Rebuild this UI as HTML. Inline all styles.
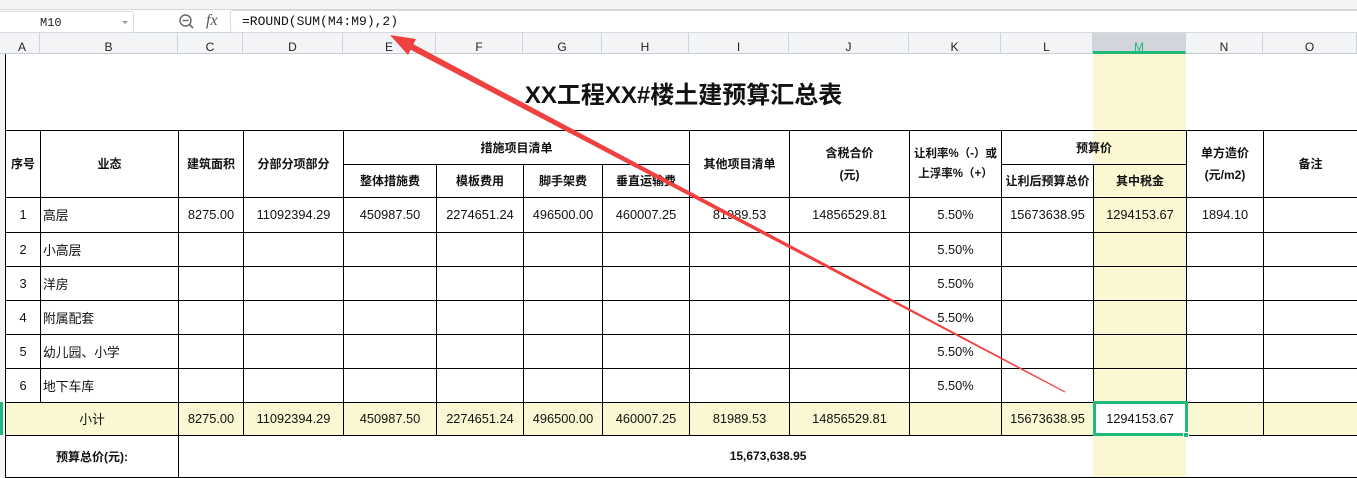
<!DOCTYPE html>
<html><head><meta charset="utf-8"><style>
*{margin:0;padding:0;box-sizing:border-box}
body{width:1357px;height:478px;overflow:hidden;background:#fff;font-family:"Liberation Sans","Noto Sans CJK SC",sans-serif;position:relative;color:#111}
.top{position:absolute;left:0;top:0;width:1357px;height:10px;background:#f3f4f6;border-bottom:1px solid #d5d7dc}
.fbar{position:absolute;left:0;top:10px;width:1357px;height:23px;background:#fff;border-bottom:1px solid #cfd2d8}
.namebox{position:absolute;left:0;top:1px;width:134px;height:22px;border:1px solid #d8dade;border-left:none;border-radius:0 3px 3px 0;font:12px "Liberation Mono",monospace;padding:4px 0 0 40px;color:#222}
.namebox:after{content:"";position:absolute;right:5px;top:9px;border:3px solid transparent;border-top:3px solid #999}
.formula{position:absolute;left:230px;top:0;width:1127px;height:23px;border:1px solid #d8dade;border-right:none;border-radius:3px 0 0 3px;font:13px "Liberation Mono",monospace;padding:3px 0 0 11px;color:#111}
.fx{position:absolute;left:206px;top:2px;font:italic 16px "Liberation Serif",serif;color:#555}
.colh{position:absolute;left:0;top:33px;width:1357px;height:21px;background:#f3f4f6;border-bottom:1px solid #c8ccd3}
.colh div{position:absolute;top:0;height:21px;font-size:12px;text-align:center;line-height:28px;color:#222;border-right:1px solid #d0d3d9}
.rowh{position:absolute;left:0;top:54px;width:5px;height:424px;background:#f3f4f6}
.ycol{position:absolute;left:1093px;top:54px;width:93px;height:424px;background:#faf7d2}
table{position:absolute;left:5px;top:54px;border-collapse:collapse;table-layout:fixed;width:1352px}
td{border:1px solid #000;font-size:12.8px;text-align:center;vertical-align:middle;padding:0;overflow:hidden;white-space:nowrap}
.b{font-weight:bold;font-size:12px}
.l{text-align:left;padding-left:2px}
.sub td{background:#faf8d2}
.sel{background:#fff!important;outline:3px solid #1fb97a;outline-offset:-2px}
</style></head><body>
<div class="top"></div>
<div class="fbar">
 <div class="namebox">M10</div>
 <svg style="position:absolute;left:178px;top:3px" width="18" height="18"><circle cx="7.5" cy="7.5" r="5.5" fill="none" stroke="#666" stroke-width="1.4"/><line x1="4.5" y1="7.5" x2="10.5" y2="7.5" stroke="#666" stroke-width="1.4"/><line x1="11.5" y1="11.5" x2="15" y2="15" stroke="#666" stroke-width="1.6"/></svg>
 <div class="fx">fx</div>
 <div class="formula">=ROUND(SUM(M4:M9),2)</div>
</div>
<div class="colh">
 <div style="left:5px;width:35px">A</div><div style="left:40px;width:138px">B</div><div style="left:178px;width:65px">C</div><div style="left:243px;width:100px">D</div><div style="left:343px;width:93px">E</div><div style="left:436px;width:87px">F</div><div style="left:523px;width:79px">G</div><div style="left:602px;width:87px">H</div><div style="left:689px;width:100px">I</div><div style="left:789px;width:120px">J</div><div style="left:909px;width:92px">K</div><div style="left:1001px;width:92px">L</div><div style="left:1093px;width:93px;background:#d2d5dc;color:#1fb97a;border-bottom:3px solid #1fb97a">M</div><div style="left:1186px;width:77px">N</div><div style="left:1263px;width:94px">O</div>
</div>
<div class="rowh"></div>
<div style="position:absolute;left:0;top:402px;width:3px;height:33px;background:#1fb97a"></div>
<div class="ycol"></div>
<table>
<colgroup><col style="width:35px"><col style="width:138px"><col style="width:65px"><col style="width:100px"><col style="width:93px"><col style="width:87px"><col style="width:79px"><col style="width:87px"><col style="width:100px"><col style="width:120px"><col style="width:92px"><col style="width:92px"><col style="width:93px"><col style="width:77px"><col style="width:94px"></colgroup>
<tr style="height:76px"><td colspan="15" class="b" style="font-size:24px;padding-top:2px;padding-left:4px;border-top:none">XX工程XX#楼土建预算汇总表</td></tr>
<tr style="height:34px"><td rowspan="2" class="b">序号</td><td rowspan="2" class="b">业态</td><td rowspan="2" class="b">建筑面积</td><td rowspan="2" class="b">分部分项部分</td><td colspan="4" class="b">措施项目清单</td><td rowspan="2" class="b">其他项目清单</td><td rowspan="2" class="b" style="line-height:22px">含税合价<br>(元)</td><td rowspan="2" class="b" style="font-size:11.5px;line-height:20px">让利率%（-）或<br>上浮率%（+）</td><td colspan="2" class="b">预算价</td><td rowspan="2" class="b" style="line-height:22px">单方造价<br>(元/m2)</td><td rowspan="2" class="b">备注</td></tr>
<tr style="height:33px"><td class="b">整体措施费</td><td class="b">模板费用</td><td class="b">脚手架费</td><td class="b">垂直运输费</td><td class="b">让利后预算总价</td><td class="b">其中税金</td></tr>
<tr style="height:35px"><td>1</td><td class="l">高层</td><td>8275.00</td><td>11092394.29</td><td>450987.50</td><td>2274651.24</td><td>496500.00</td><td>460007.25</td><td>81989.53</td><td>14856529.81</td><td>5.50%</td><td>15673638.95</td><td>1294153.67</td><td>1894.10</td><td></td></tr>
<tr style="height:34px"><td>2</td><td class="l">小高层</td><td></td><td></td><td></td><td></td><td></td><td></td><td></td><td></td><td>5.50%</td><td></td><td></td><td></td><td></td></tr>
<tr style="height:34px"><td>3</td><td class="l">洋房</td><td></td><td></td><td></td><td></td><td></td><td></td><td></td><td></td><td>5.50%</td><td></td><td></td><td></td><td></td></tr>
<tr style="height:34px"><td>4</td><td class="l">附属配套</td><td></td><td></td><td></td><td></td><td></td><td></td><td></td><td></td><td>5.50%</td><td></td><td></td><td></td><td></td></tr>
<tr style="height:34px"><td>5</td><td class="l">幼儿园、小学</td><td></td><td></td><td></td><td></td><td></td><td></td><td></td><td></td><td>5.50%</td><td></td><td></td><td></td><td></td></tr>
<tr style="height:34px"><td>6</td><td class="l">地下车库</td><td></td><td></td><td></td><td></td><td></td><td></td><td></td><td></td><td>5.50%</td><td></td><td></td><td></td><td></td></tr>
<tr style="height:33px" class="sub"><td colspan="2">小计</td><td>8275.00</td><td>11092394.29</td><td>450987.50</td><td>2274651.24</td><td>496500.00</td><td>460007.25</td><td>81989.53</td><td>14856529.81</td><td></td><td>15673638.95</td><td class="sel">1294153.67</td><td></td><td></td></tr>
<tr style="height:42px"><td colspan="2" class="b">预算总价(元):</td><td colspan="13" class="b" style="border-top:1px solid #000">15,673,638.95</td></tr>
</table>
<div style="position:absolute;left:1183px;top:432px;width:6px;height:6px;background:#1fb97a;border:1px solid #fff"></div>
<svg style="position:absolute;left:0;top:0" width="1357" height="478">
<polygon points="390,35 416,39 413.4,44.3 1065.3,391.5 1064.7,392.5 410.6,49.7 408,55" fill="#f0403f"/>
</svg>
</body></html>
